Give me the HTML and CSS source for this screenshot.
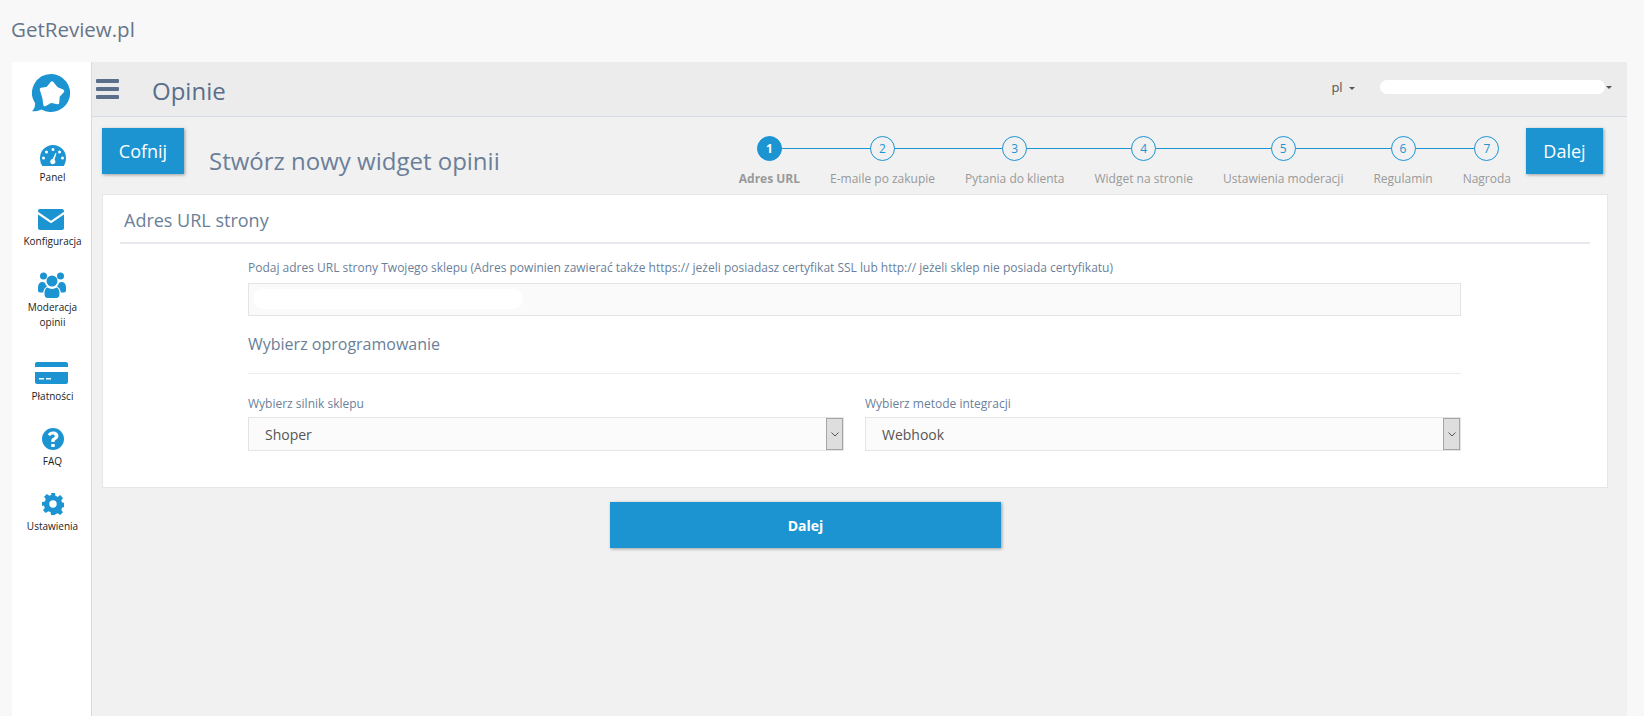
FILE: index.html
```html
<!DOCTYPE html>
<html lang="pl">
<head>
  <meta charset="UTF-8">
  <meta name="viewport" content="width=device-width, initial-scale=1.0">
  <title>GetReview.pl</title>
  <link rel="stylesheet" href="styles.css">
</head>
<body>
  <div class="brand">GetReview.pl</div>

  <div class="app">
    <aside class="sidebar">
      <svg class="logo" viewBox="0 0 38 38">
        <path fill="#1c94d2" d="M19 0a19 19 0 1 1-9.500 35.400C6.600 36.800 3.500 37.400 0 37.300 2 35.500 3 33 3.200 29.500A19 19 0 0 1 19 0z"/>
        <polygon fill="#fff" stroke="#fff" stroke-width="3.500" stroke-linejoin="round" points="20,9 24.500,14.500 30.500,17 26,22 25.500,28.500 19,27 13,30.500 12,23.500 9.500,15.500 15.500,14.500"/>
      </svg>

      <a class="nav-item nav-panel">
        <svg class="icon" width="26" height="21" viewBox="0 0 26 21">
          <path fill="#1c94d2" fill-rule="evenodd" d="M13 0a13 13 0 0 1 13 13c0 3-.8 5.600-2.300 8H2.300A14 14 0 0 1 0 13 13 13 0 0 1 13 0zM13 3a1.500 1.500 0 1 0 0 3 1.500 1.500 0 0 0 0-3zM6.500 5.500a1.500 1.500 0 1 0 0 3 1.500 1.500 0 0 0 0-3zM19.500 5.500a1.500 1.500 0 1 0 0 3 1.500 1.500 0 0 0 0-3zM3.500 11.500a1.500 1.500 0 1 0 0 3 1.500 1.500 0 0 0 0-3zM22.500 11.500a1.500 1.500 0 1 0 0 3 1.500 1.500 0 0 0 0-3zM15.500 8l-2.800 6.100a2.600 2.600 0 1 0 1.800.6L16.500 8.300z"/>
        </svg>
        <span>Panel</span>
      </a>
      <a class="nav-item nav-mail">
        <svg class="icon" width="26" height="21" viewBox="0 0 26 21">
          <path fill="#1c94d2" d="M2 0h22c1.100 0 2 .9 2 2v.8l-13 9-13-9V2C0 .9.900 0 2 0zM0 5.400l13 8.800 13-8.800V19c0 1.100-.9 2-2 2H2c-1.100 0-2-.9-2-2z"/>
        </svg>
        <span>Konfiguracja</span>
      </a>
      <a class="nav-item nav-users">
        <svg class="icon" width="28" height="26" viewBox="0 0 28 26">
          <g fill="#1c94d2">
            <circle cx="5.500" cy="4" r="3.500"/>
            <circle cx="22.500" cy="4" r="3.500"/>
            <circle cx="14" cy="9" r="5.500"/>
            <path d="M0 15c0-3 2-5 4-5 1 0 1.800.6 3 .7.300 1.500 1 2.800 2 3.800-2 1-3.500 3-3.800 6H2c-1.200 0-2-.7-2-2zM28 15c0-3-2-5-4-5-1 0-1.800.6-3 .7-.3 1.500-1 2.800-2 3.800 2 1 3.500 3 3.800 6H26c1.200 0 2-.7 2-2zM9.500 15.500c1.200.9 2.800 1.400 4.500 1.400s3.300-.5 4.500-1.400c2.300.3 3 3.500 3 6.500 0 2.400-1.300 4-3.300 4H9.800c-2 0-3.300-1.600-3.300-4 0-3 .7-6.200 3-6.500z"/>
          </g>
        </svg>
        <span>Moderacja<br>opinii</span>
      </a>
      <a class="nav-item nav-card">
        <svg class="icon" width="33" height="22" viewBox="0 0 33 22">
          <path fill="#1c94d2" fill-rule="evenodd" d="M2 0h29c1.100 0 2 .9 2 2v3H0V2C0 .9.900 0 2 0zM0 10h33v10c0 1.100-.9 2-2 2H2c-1.100 0-2-.9-2-2zM4 16v1.500h5V16zM11 16v1.500h5V16z"/>
        </svg>
        <span>Płatności</span>
      </a>
      <a class="nav-item nav-faq">
        <svg class="icon" width="22" height="22" viewBox="0 0 22 22">
          <path fill="#1c94d2" fill-rule="evenodd" d="M11 0a11 11 0 1 1 0 22 11 11 0 0 1 0-22zM9.300 16v3h3.400v-3zM11 3.500c-2.500 0-4.300 1.100-5.200 2.900l2.300 1.600c.6-1 1.500-1.600 2.700-1.600 1.200 0 2 .6 2 1.500 0 .8-.6 1.300-1.500 1.800-1.300.8-2 1.600-2 3.200v1h3.400v-.7c0-.7.4-1 1.200-1.500 1.400-.8 2.500-1.800 2.500-3.900 0-2.600-2.300-4.300-5-4.300z"/>
        </svg>
        <span>FAQ</span>
      </a>
      <a class="nav-item nav-cog">
        <svg class="icon" width="22" height="22" viewBox="0 0 22 22">
          <path fill="#1c94d2" fill-rule="evenodd" d="M9 0h4l.5 3a8.200 8.200 0 0 1 2.200.9l2.500-1.800 2.800 2.800-1.800 2.500c.4.700.7 1.400.9 2.200l2.900.4v4l-2.900.5c-.2.800-.5 1.500-.9 2.200l1.700 2.500-2.800 2.800-2.400-1.800c-.7.400-1.400.7-2.200.9L13 22H9l-.5-2.900a8.200 8.200 0 0 1-2.200-.9l-2.500 1.800-2.800-2.800 1.800-2.500a8.200 8.200 0 0 1-.9-2.200L0 13V9l2.900-.5c.2-.8.500-1.500.9-2.200L2.100 3.800l2.800-2.800 2.400 1.800c.7-.4 1.400-.7 2.200-.9zM11 7.300a3.700 3.700 0 1 0 0 7.400 3.700 3.700 0 0 0 0-7.400z"/>
        </svg>
        <span>Ustawienia</span>
      </a>
    </aside>

    <main class="content">
      <header class="topbar">
        <div class="burger"><i></i><i></i><i></i></div>
        <h1 class="page-title">Opinie</h1>
        <div class="lang">pl <b class="caret"></b></div>
        <div class="user"><span class="user-blur"></span><b class="caret"></b></div>
      </header>

      <div class="wizard-head">
        <a class="btn btn-back">Cofnij</a>
        <h2 class="wizard-title">Stwórz nowy widget opinii</h2>
        <ol class="steps">
          <li class="step active"><span class="dot">1</span><span class="step-label">Adres URL</span></li>
          <li class="step"><span class="dot">2</span><span class="step-label">E-maile po zakupie</span></li>
          <li class="step"><span class="dot">3</span><span class="step-label">Pytania do klienta</span></li>
          <li class="step"><span class="dot">4</span><span class="step-label">Widget na stronie</span></li>
          <li class="step"><span class="dot">5</span><span class="step-label">Ustawienia moderacji</span></li>
          <li class="step"><span class="dot">6</span><span class="step-label">Regulamin</span></li>
          <li class="step"><span class="dot">7</span><span class="step-label">Nagroda</span></li>
        </ol>
        <a class="btn btn-next">Dalej</a>
      </div>

      <section class="card">
        <h3 class="card-title">Adres URL strony</h3>
        <div class="form">
          <label class="field-label">Podaj adres URL strony Twojego sklepu (Adres powinien zawierać także https:// jeżeli posiadasz certyfikat SSL lub http:// jeżeli sklep nie posiada certyfikatu)</label>
          <div class="url-input"><span class="url-blur"></span></div>
          <h4 class="form-title">Wybierz oprogramowanie</h4>
          <div class="select-row">
            <div>
              <label class="field-label">Wybierz silnik sklepu</label>
              <div class="select-box">
                <select><option>Shoper</option></select>
                <span class="select-arrow"><svg width="8" height="5" viewBox="0 0 8 5"><path d="M.5.5L4 4 7.500.5" fill="none" stroke="#555"/></svg></span>
              </div>
            </div>
            <div>
              <label class="field-label">Wybierz metode integracji</label>
              <div class="select-box">
                <select><option>Webhook</option></select>
                <span class="select-arrow"><svg width="8" height="5" viewBox="0 0 8 5"><path d="M.5.5L4 4 7.500.5" fill="none" stroke="#555"/></svg></span>
              </div>
            </div>
          </div>
        </div>
      </section>

      <div class="submit-row">
        <a class="btn btn-submit">Dalej</a>
      </div>
    </main>
  </div>
</body>
</html>
```

FILE: styles.css
```css
html, body {
  height: 100%;
}
body {
  margin: 0;
  background-color: #f8f8f8;
  font-family: "Open Sans", Arial, sans-serif;
  color: #5b6f8a;
  overflow: hidden;
}
.brand {
  height: 62px;
  padding-left: 11px;
  font-size: 20.5px;
  line-height: 58px;
  color: #66758a;
}
.app {
  display: flex;
  margin: 0 17px 0 12px;
  height: 654px;
}

/* sidebar */
.sidebar {
  width: 77px;
  flex: none;
  background-color: white;
  border-right: 1px solid #d5dbe3;
  display: flex;
  flex-direction: column;
  align-items: center;
  padding: 12px 0 0 2px;
}
.logo {
  width: 38px;
  height: 38px;
  margin-right: 4px;
}
.nav-item {
  display: flex;
  flex-direction: column;
  align-items: center;
  text-align: center;
  font-size: 10px;
  line-height: 15px;
  color: #222;
}
.nav-item .icon {
  display: block;
  margin-bottom: 4px;
}
.nav-panel { margin-top: 33px; }
.nav-mail { margin-top: 24px; }
.nav-mail .icon { margin-right: 4px; }
.nav-users { margin-top: 23px; }
.nav-users .icon { margin-bottom: 2px; }
.nav-card { margin-top: 32px; }
.nav-card .icon { margin: 0 2px 5px 0; }
.nav-faq { margin-top: 24px; }
.nav-cog { margin-top: 24px; }

/* main area */
.content {
  flex: 1;
  background-color: #f1f1f1;
  min-width: 0;
}
.topbar {
  height: 54px;
  display: flex;
  align-items: center;
  background-color: #ececec;
  border-bottom: 1px solid #d5dbe3;
}
.burger {
  width: 23px;
  margin-left: 4px;
  display: flex;
  flex-direction: column;
  gap: 4px;
}
.burger i {
  display: block;
  height: 4px;
  background-color: #5b6f8a;
  border-radius: 1px;
}
.page-title {
  margin: 3px 0 0 33px;
  font-size: 24px;
  font-weight: 400;
  color: #5b6f8a;
}
.lang {
  margin-left: auto;
  font-size: 13px;
  color: #555;
  margin-top: -4px;
}
.user {
  display: flex;
  align-items: center;
  margin: -4px 15px 0 25px;
}
.user-blur {
  display: block;
  width: 225px;
  height: 14px;
  background-color: white;
  border-radius: 7px;
  margin-right: 1px;
}
.caret {
  display: inline-block;
  border-top: 3px solid #555;
  border-left: 3px solid transparent;
  border-right: 3px solid transparent;
  vertical-align: middle;
  margin-left: 3px;
}
.user .caret {
  margin-left: 0;
}

/* buttons */
.btn {
  display: block;
  background-color: #1c94d2;
  color: white;
  text-align: center;
  box-shadow: 1px 1px 3px rgba(0, 0, 0, 0.35);
  cursor: pointer;
}
.btn-back, .btn-next {
  height: 46px;
  line-height: 46px;
  font-size: 18px;
  flex: none;
}
.btn-back { width: 82px; }
.btn-next { width: 77px; }
.btn-submit {
  width: 391px;
  height: 46px;
  line-height: 48px;
  font-size: 14px;
  font-weight: 700;
}

/* wizard head */
.wizard-head {
  display: flex;
  align-items: flex-start;
  padding: 11px 24px 0 10px;
  height: 66px;
}
.wizard-title {
  margin: 17px 0 0 25px;
  font-size: 24px;
  line-height: 32px;
  font-weight: 400;
  color: #6b7f99;
  white-space: nowrap;
}
.steps {
  list-style: none;
  margin: 8px 0 0 auto;
  padding: 0;
  display: flex;
}
.step {
  position: relative;
  padding: 0 15px;
  text-align: center;
}
.step::before,
.step::after {
  content: "";
  position: absolute;
  top: 12px;
  height: 1px;
  width: 50%;
  background-color: #1c94d2;
}
.step::before { left: 0; }
.step::after { left: 50%; }
.step:first-child::before,
.step:last-child::after {
  display: none;
}
.dot {
  position: relative;
  z-index: 1;
  display: block;
  box-sizing: border-box;
  width: 25px;
  height: 25px;
  margin: 0 auto;
  border: 1px solid #1c94d2;
  border-radius: 50%;
  background-color: #f1f1f1;
  color: #1c94d2;
  font-size: 12px;
  line-height: 23px;
}
.step.active .dot {
  background-color: #1c94d2;
  color: white;
  font-weight: 700;
}
.step-label {
  display: block;
  margin-top: 10px;
  font-size: 12px;
  line-height: 16px;
  color: #999;
  white-space: nowrap;
}
.step.active .step-label {
  font-weight: 700;
}

/* card */
.card {
  margin: 0 19px 0 10px;
  height: 294px;
  box-sizing: border-box;
  background-color: white;
  border: 1px solid #e6e6e6;
  padding: 0 17px;
}
.card-title {
  margin: 0;
  height: 47px;
  padding-left: 4px;
  border-bottom: 2px solid #e7e9ee;
  font-size: 18px;
  line-height: 50px;
  font-weight: 400;
  color: #6b7f99;
}
.form {
  margin: 0 129px 0 128px;
}
.field-label {
  display: block;
  padding-top: 15px;
  font-size: 12px;
  line-height: 18px;
  color: #6b7f99;
}
.url-input {
  margin-top: 6px;
  height: 33px;
  box-sizing: border-box;
  background-color: #fafafa;
  border: 1px solid #e4e4e4;
  padding: 5px 4px;
}
.url-blur {
  display: block;
  width: 270px;
  height: 20px;
  background-color: white;
  border-radius: 10px;
}
.form-title {
  margin: 0;
  height: 57px;
  border-bottom: 1px solid #ececec;
  font-size: 16px;
  line-height: 56px;
  font-weight: 400;
  color: #6b7f99;
}
.select-row {
  display: grid;
  grid-template-columns: 1fr 1fr;
  gap: 21px;
  padding-top: 6px;
}
.select-box {
  position: relative;
  margin-top: 4px;
}
.select-box select {
  display: block;
  width: 100%;
  height: 34px;
  box-sizing: border-box;
  appearance: none;
  border: 1px solid #e4e4e4;
  border-radius: 0;
  background-color: #fbfbfb;
  padding: 0 16px;
  font-family: "Open Sans", Arial, sans-serif;
  font-size: 14px;
  color: #555;
}
.select-arrow {
  position: absolute;
  top: 1px;
  right: 1px;
  width: 17px;
  height: 32px;
  box-sizing: border-box;
  background-color: #dedede;
  border: 1px solid #a5a5a5;
  display: flex;
  align-items: center;
  justify-content: center;
  pointer-events: none;
}

.submit-row {
  display: flex;
  justify-content: center;
  padding: 14px 108px 0 0;
}
```
